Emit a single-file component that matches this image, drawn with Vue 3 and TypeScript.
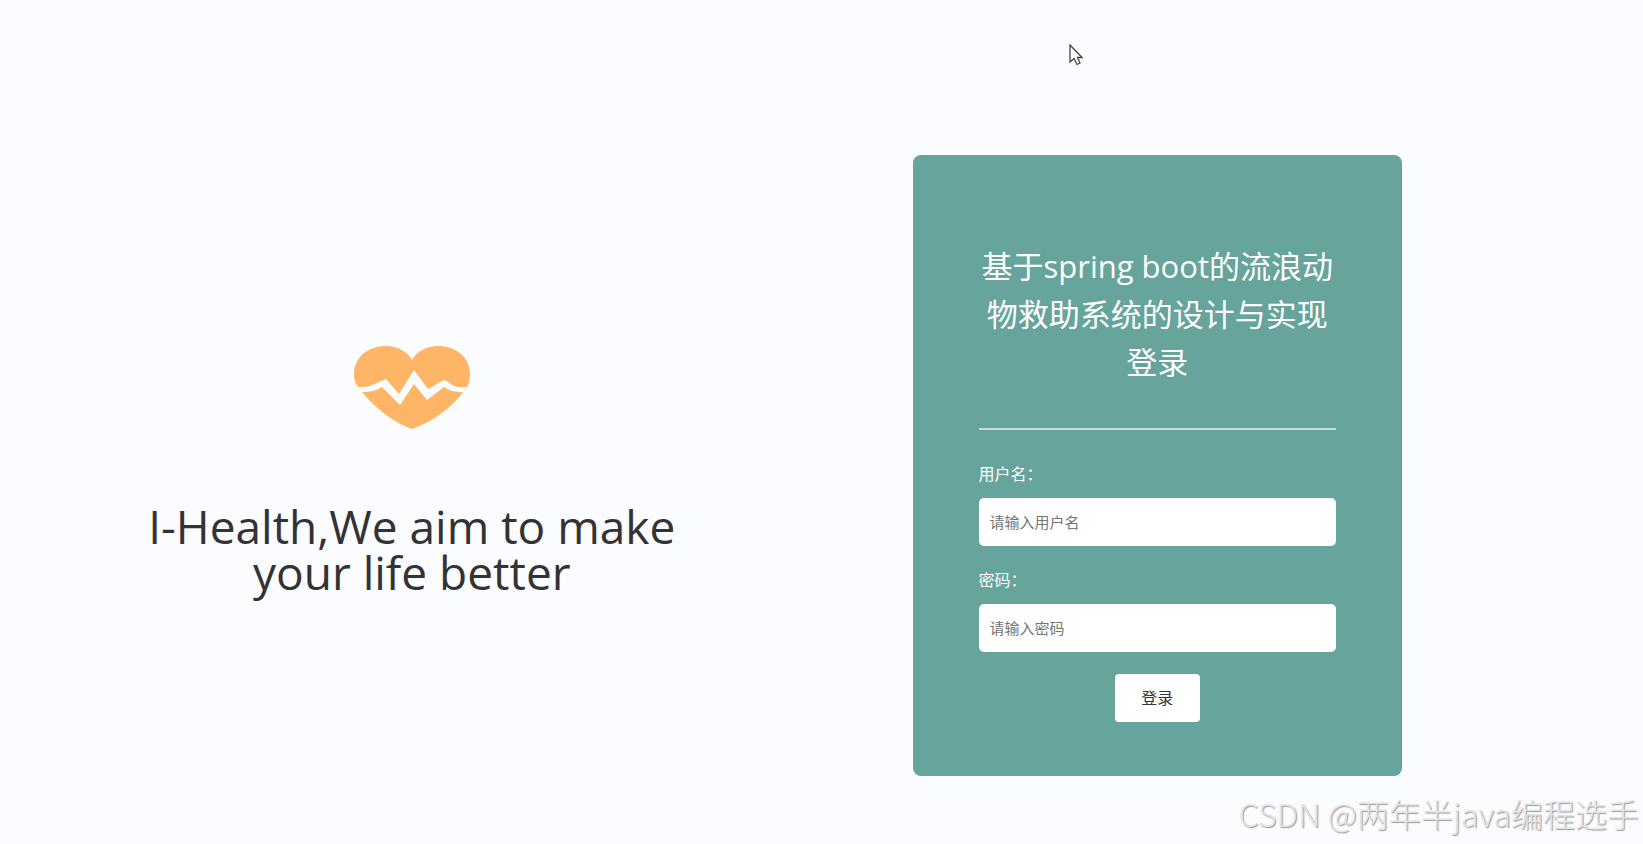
<script setup lang="ts">
import { ref } from 'vue'

const titleLines: string[] = ['基于spring boot的流浪动', '物救助系统的设计与实现', '登录']
const username = ref('')
const password = ref('')
</script>

<template>
  <main class="page">
    <section class="intro">
      <svg class="heart" viewBox="0 0 116 84" aria-hidden="true">
        <path
          d="M58 15C63 6 73 1 84 1C103 1 116 13 116 29C116 34 115 38 113 42H107C101 42 98 40 94 37L90 35L74 44L60 25L45 49L32 34L18 40C13 42 9 42 4 42C1 38 0 34 0 29C0 13 13 1 32 1C43 1 53 6 58 15Z"
        />
        <path
          d="M8 47C16 47 22 46 28 42L46 60L60 39L73 55L90 42C96 46 101 47 109 47C98 63 76 78 58 84C40 78 20 62 8 47Z"
        />
      </svg>
      <h1 class="slogan">I-Health,We aim to make<br />your life better</h1>
    </section>

    <section class="side">
      <form class="card" @submit.prevent>
        <h2 class="title">
          <span v-for="line in titleLines" :key="line" class="title-line">{{ line }}</span>
        </h2>
        <hr class="divider" />
        <label class="label" for="username">用户名：</label>
        <input id="username" v-model="username" class="field" type="text" placeholder="请输入用户名" />
        <label class="label" for="password">密码：</label>
        <input id="password" v-model="password" class="field" type="password" placeholder="请输入密码" />
        <button class="submit" type="submit">登录</button>
      </form>
    </section>

    <svg class="pointer" viewBox="0 0 14 22" aria-hidden="true">
      <path d="M1 1V18L5 14.500L8 20.500L11 19L8.500 13.500H13Z" />
    </svg>
    <p class="watermark">CSDN @两年半java编程选手</p>
  </main>
</template>

<style>
body {
  margin: 0;
  background: #fbfcff;
}
</style>

<style scoped>
.page {
  position: relative;
  display: grid;
  grid-template-columns: 1fr 1fr;
  align-items: center;
  box-sizing: border-box;
  min-height: 100vh;
  padding: 154px 0 68px;
  background: #fbfcff;
  color: #333;
  font-family: 'Open Sans', 'Noto Sans CJK SC', sans-serif;
}

.intro {
  display: flex;
  flex-direction: column;
  align-items: center;
  gap: 74px;
  padding: 10px 0 0 2px;
}

.heart {
  width: 116px;
  height: 84px;
  fill: #ffb566;
}

.slogan {
  margin: 0;
  font-size: 46px;
  font-weight: 400;
  line-height: 46px;
  text-align: center;
}

.side {
  padding-left: 91px;
}

.card {
  display: flex;
  flex-direction: column;
  box-sizing: border-box;
  width: 67%;
  min-width: 489px;
  padding: 87px 66px 54px;
  border-radius: 8px;
  background: #66a49c;
}

.title {
  margin: 0;
  color: #fff;
  font-size: 31px;
  font-weight: 400;
  line-height: 48px;
  text-align: center;
}

.title-line {
  display: block;
  white-space: nowrap;
}

.divider {
  width: 100%;
  height: 2px;
  margin: 42px 0 32px;
  border: 0;
  background: #c3dcd9;
}

.label {
  margin-bottom: 12px;
  color: #fff;
  font-size: 16px;
  line-height: 24px;
}

.field {
  box-sizing: border-box;
  width: 100%;
  height: 48px;
  margin: 0 0 22px;
  padding: 0 11px;
  border: 0;
  border-radius: 5px;
  background: #fff;
  color: #333;
  font-family: inherit;
  font-size: 15px;
}

.field::placeholder {
  color: #757575;
}

.submit {
  align-self: center;
  width: 85px;
  height: 48px;
  padding: 0 0 2px;
  border: 0;
  border-radius: 4px;
  background: #fff;
  color: #333;
  font-family: inherit;
  font-size: 16px;
}

.pointer {
  position: absolute;
  top: 44px;
  left: 1069px;
  width: 14px;
  height: 22px;
  fill: #fff;
  stroke: #444;
  stroke-width: 1.3;
}

.watermark {
  position: absolute;
  right: 4px;
  bottom: 7px;
  margin: 0;
  color: #e3e4e6;
  font-family: 'Noto Sans CJK SC', sans-serif;
  font-size: 32px;
  font-weight: 300;
  line-height: 48px;
  white-space: nowrap;
  text-shadow: 1px 1px 1px #999;
}
</style>
